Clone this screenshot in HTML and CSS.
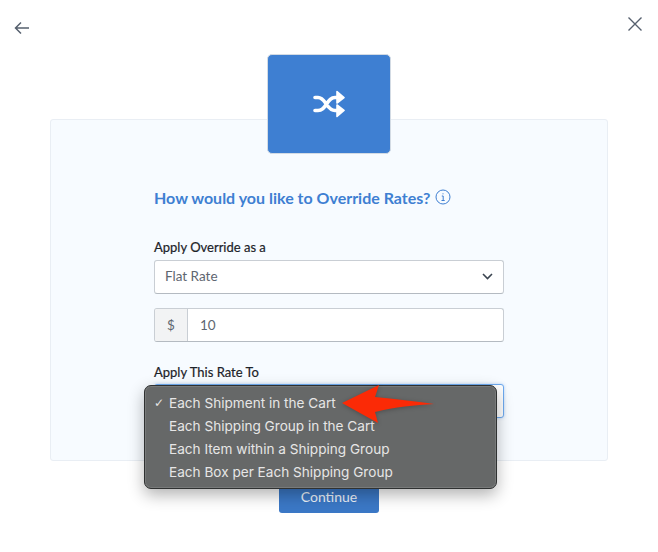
FILE: index.html
```html
<!DOCTYPE html>
<html lang="en">
<head>
<meta charset="utf-8">
<title>Override Rates</title>
<link rel="stylesheet" href="styles.css">
</head>
<body>
<div class="modal">
  <button class="icon-btn back" aria-label="Back">
    <svg width="16" height="14" viewBox="0 0 16 14" fill="none" stroke="#56606e" stroke-width="1.5"><path d="M15 7H1.5M7 1.5 1.5 7 7 12.5"/></svg>
  </button>
  <button class="icon-btn close" aria-label="Close">
    <svg width="16" height="16" viewBox="0 0 16 16" fill="none" stroke="#56606e" stroke-width="1.4"><path d="M1.5 1.5 14.5 14.5M14.5 1.5 1.5 14.5"/></svg>
  </button>

  <div class="tile">
    <svg width="32" height="28" viewBox="0 0 32 28" fill="none">
      <path d="M2 7.500H5C9.500 7.500 11 11 13.500 14.500C16 18 18 20.500 22 20.500H25M2 20.500H5C9.500 20.500 11 17.500 13.500 14C16 10.500 18 7.500 22 7.500H25" stroke="#fff" stroke-width="3.600" stroke-linecap="round"/>
      <path d="M24 1.500 31 7.500 24 13ZM24 15 31 20.500 24 26.500Z" fill="#fff" stroke="#fff" stroke-width="1.600" stroke-linejoin="round"/>
    </svg>
  </div>

  <section class="panel">
    <h2 class="title">How would you like to Override Rates?
      <svg class="info" width="16" height="16" viewBox="0 0 16 16" fill="none" stroke="#3e7fd2"><circle cx="8" cy="8" r="7"/><path d="M6.800 7H8.200V11.500M6.500 11.500H9.700M8 4.300V5.300"/></svg>
    </h2>

    <label class="label">Apply Override as a</label>
    <div class="field select">
      <span>Flat Rate</span>
      <svg width="11" height="7" viewBox="0 0 11 7" fill="none" stroke="#3b4450" stroke-width="1.600"><path d="M1 1 5.500 5.500 10 1"/></svg>
    </div>

    <div class="field amount">
      <span class="addon">$</span>
      <span class="value">10</span>
    </div>

    <label class="label second">Apply This Rate To</label>
    <div class="field select focused"></div>
  </section>

  <button class="continue">Continue</button>

  <ul class="menu">
    <li class="checked">Each Shipment in the Cart</li>
    <li>Each Shipping Group in the Cart</li>
    <li>Each Item within a Shipping Group</li>
    <li>Each Box per Each Shipping Group</li>
  </ul>

  <svg class="pointer" width="96" height="42" viewBox="0 0 96 42">
    <path d="M2 19 39 1 35 13C55 15 75 17 94 20C75 21 55 23 35 28L38 39Z" fill="#fb2a06"/>
  </svg>
</div>
</body>
</html>
```
FILE: styles.css
```css
* {
  box-sizing: border-box;
}

html,
body {
  margin: 0;
  background: #fff;
}

.modal {
  position: relative;
  width: 658px;
  height: 552px;
  padding-top: 54px;
  display: flex;
  flex-direction: column;
  align-items: center;
  overflow: hidden;
  font-family: "Lato", "Liberation Sans", sans-serif;
}

.icon-btn {
  position: absolute;
  padding: 0;
  border: 0;
  background: none;
  line-height: 0;
}

.back {
  left: 14px;
  top: 21px;
}

.close {
  left: 627px;
  top: 16px;
}

.tile {
  position: relative;
  z-index: 1;
  width: 124px;
  height: 100px;
  margin-bottom: -35px;
  display: flex;
  align-items: center;
  justify-content: center;
  background: #3e7fd2;
  border: 1px solid #d3dbe4;
  border-radius: 5px;
}

.panel {
  width: 558px;
  height: 342px;
  padding: 67px 103px 0;
  background: #f7fbff;
  border: 1px solid #e9eef4;
  border-radius: 3px;
}

.title {
  margin: 0 0 31px;
  padding-bottom: 2px;
  display: flex;
  align-items: center;
  gap: 5px;
  height: 22px;
  font-size: 16px;
  font-weight: 700;
  color: #3e7fd2;
}

.label {
  display: block;
  height: 14px;
  margin-bottom: 6px;
  font-size: 13px;
  line-height: 14px;
  color: #1c2228;
  -webkit-text-stroke: 0.2px #1c2228;
}

.second {
  margin-top: 23px;
  margin-bottom: 5px;
}

.field {
  width: 350px;
  height: 34px;
  background: #fff;
  border: 1px solid #c9ced4;
  border-bottom-color: #b4bac1;
  border-radius: 3px;
  font-size: 13.5px;
  color: #5e6670;
}

.select {
  display: flex;
  align-items: center;
  justify-content: space-between;
  padding: 0 10px 2px;
}

.amount {
  display: flex;
  margin-top: 14px;
}

.addon {
  width: 33px;
  display: flex;
  align-items: center;
  justify-content: center;
  background: #f2f3f4;
  border-right: 1px solid #c9ced4;
  border-radius: 2px 0 0 2px;
}

.value {
  padding-left: 12px;
  line-height: 32px;
}

.focused {
  border: 1px solid #6eaaf0;
  box-shadow: 0 0 3px rgba(110, 170, 240, 0.5);
}

.continue {
  width: 100px;
  height: 30px;
  margin-top: 22px;
  padding: 0 0 3px;
  background: #3b78c6;
  border: 0;
  border-radius: 3px;
  font-family: inherit;
  font-size: 14px;
  color: #eef4fb;
}

.menu {
  position: absolute;
  z-index: 2;
  left: 144px;
  top: 385px;
  width: 353px;
  height: 104px;
  margin: 0;
  padding: 6px 0 0 24px;
  list-style: none;
  background: #666868;
  border: 1px solid #2f3131;
  border-radius: 7px;
  box-shadow: 0 0 0 1px rgba(255, 255, 255, 0.12) inset, 0 6px 16px rgba(0, 0, 0, 0.3);
  font-family: "Inter", "Liberation Sans", sans-serif;
  font-size: 13.6px;
  color: #e6e6e6;
}

.menu li {
  position: relative;
  height: 23px;
  line-height: 23px;
}

.checked::before {
  content: "✓";
  position: absolute;
  left: -15px;
  font-family: "DejaVu Sans", sans-serif;
  font-size: 12px;
}

.pointer {
  position: absolute;
  z-index: 3;
  left: 340px;
  top: 384px;
  filter: drop-shadow(0 1px 2px rgba(0, 0, 0, 0.25));
}
```
